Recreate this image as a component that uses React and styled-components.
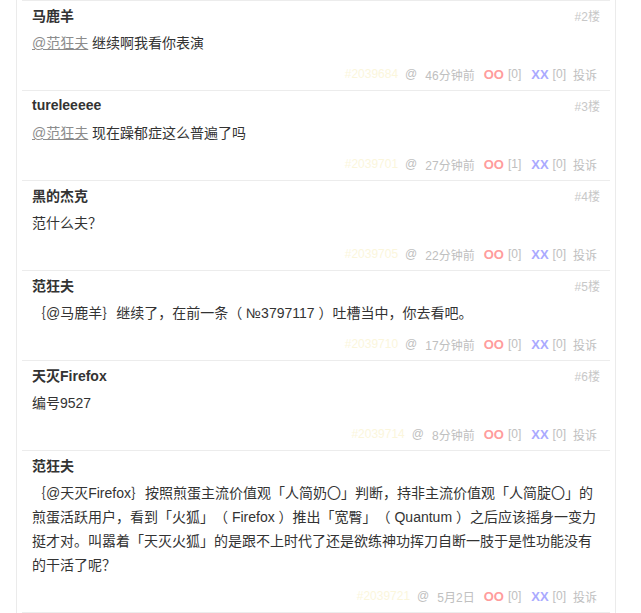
import React from "react";
import styled, { createGlobalStyle } from "styled-components";

const GlobalStyle = createGlobalStyle`
  body {
    margin: 0;
    background: #fff;
    font-family: "Liberation Sans", "Noto Sans CJK SC", sans-serif;
  }
`;

const CommentList = styled.ol`
  list-style: none;
  margin: 0 0 0 16px;
  padding: 0 5px;
  width: 588px;
  border-left: 1px solid #ebebeb;
  border-right: 1px solid #ebebeb;
`;

const Row = styled.li`
  border-top: 1px solid #ececec;
  padding: 5px 10px 6px;
  &:last-child {
    border-bottom: 1px solid #ececec;
  }
`;

const Header = styled.div`
  display: flex;
  justify-content: space-between;
  align-items: center;
  height: 18px;
`;

const Author = styled.strong`
  font-size: 14px;
  font-weight: bold;
  color: #333;
`;

const Floor = styled.span`
  font-size: 12px;
  color: #c8c8c8;
`;

const Content = styled.p`
  margin: 7px 0 0;
  font-size: 14px;
  line-height: 24px;
  color: #333;
  text-spacing-trim: space-all;
`;

const Mention = styled.a`
  color: #8c8c8c;
  text-decoration: underline;
`;

const Footer = styled.div`
  display: flex;
  justify-content: flex-end;
  align-items: center;
  height: 20px;
  margin-top: 9px;
  padding-right: 3px;
  font-size: 12px;
  color: #c0c0c0;
`;

const Meta = styled.span`
  margin-left: ${(p) => p.$gap || 0}px;
  color: ${(p) => p.$color || "inherit"};
  font-weight: ${(p) => (p.$bold ? "bold" : "normal")};
  font-size: ${(p) => (p.$bold ? "13px" : "12px")};
`;

const comments = [
  {
    floor: 2,
    author: "马鹿羊",
    mention: "@范狂夫",
    text: " 继续啊我看你表演",
    id: "#2039684",
    time: "46分钟前",
    oo: 0,
    xx: 0,
  },
  {
    floor: 3,
    author: "tureleeeee",
    mention: "@范狂夫",
    text: " 现在躁郁症这么普遍了吗",
    id: "#2039701",
    time: "27分钟前",
    oo: 1,
    xx: 0,
  },
  {
    floor: 4,
    author: "黑的杰克",
    text: "范什么夫？",
    id: "#2039705",
    time: "22分钟前",
    oo: 0,
    xx: 0,
  },
  {
    floor: 5,
    author: "范狂夫",
    text: "｛@马鹿羊｝继续了，在前一条（ №3797117 ）吐槽当中，你去看吧。",
    id: "#2039710",
    time: "17分钟前",
    oo: 0,
    xx: 0,
  },
  {
    floor: 6,
    author: "天灭Firefox",
    text: "编号9527",
    id: "#2039714",
    time: "8分钟前",
    oo: 0,
    xx: 0,
  },
  {
    author: "范狂夫",
    text:
      "｛@天灭Firefox｝按照煎蛋主流价值观「人简奶〇」判断，持非主流价值观「人简腚〇」的煎蛋活跃用户，看到「火狐」（ Firefox ）推出「宽臀」（ Quantum ）之后应该摇身一变力挺才对。叫嚣着「天灭火狐」的是跟不上时代了还是欲练神功挥刀自断一肢于是性功能没有的干活了呢？",
    id: "#2039721",
    time: "5月2日",
    oo: 0,
    xx: 0,
  },
];

const Comment = ({ c }) => (
  <Row>
    <Header>
      <Author>{c.author}</Author>
      {c.floor && <Floor>#{c.floor}楼</Floor>}
    </Header>
    <Content>
      {c.mention && <Mention>{c.mention}</Mention>}
      {c.text}
    </Content>
    <Footer>
      <Meta $color="#fbf6dc">{c.id}</Meta>
      <Meta $gap={7}>@</Meta>
      <Meta $gap={8}>{c.time}</Meta>
      <Meta $gap={9} $color="#ff9c9c" $bold>
        OO
      </Meta>
      <Meta $gap={4}>[{c.oo}]</Meta>
      <Meta $gap={10} $color="#aaaaff" $bold>
        XX
      </Meta>
      <Meta $gap={4}>[{c.xx}]</Meta>
      <Meta $gap={7}>投诉</Meta>
    </Footer>
  </Row>
);

export default function App() {
  return (
    <>
      <GlobalStyle />
      <CommentList>
        {comments.map((c) => (
          <Comment key={c.id} c={c} />
        ))}
      </CommentList>
    </>
  );
}
